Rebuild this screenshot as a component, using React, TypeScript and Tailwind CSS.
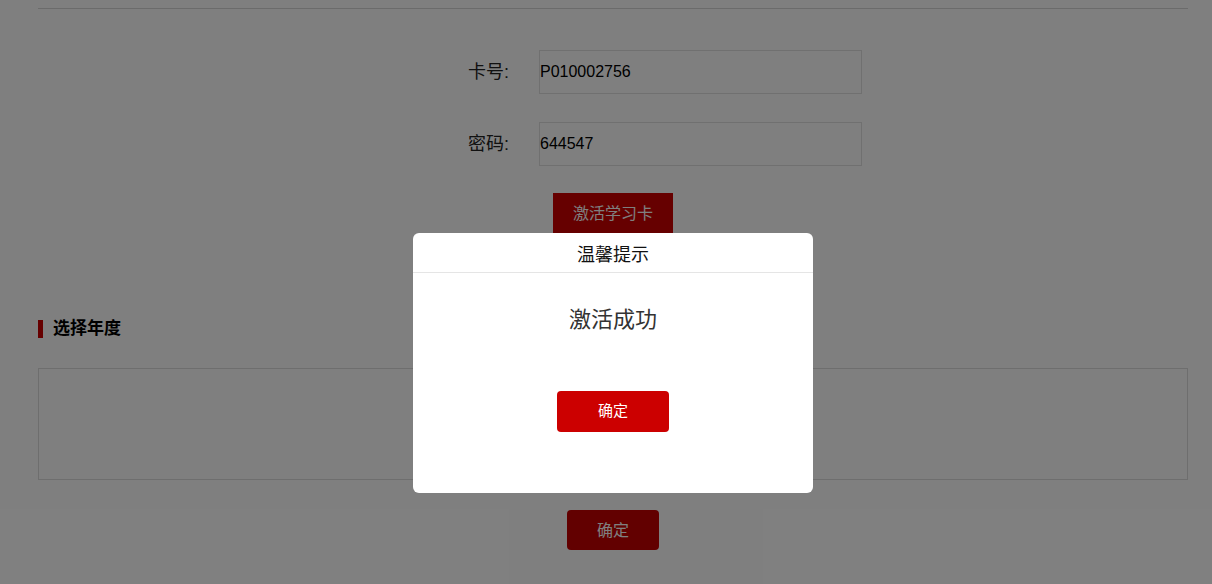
import React from "react";

export default function App() {
  const font = { fontFamily: '"Liberation Sans", "Noto Sans CJK SC", sans-serif' };
  return (
    <div className="relative w-[1212px] h-[584px] overflow-hidden bg-white" style={font}>
      <div className="px-[38px] pt-[8px] w-[1226px]">
        <div className="border-t border-[#d6d6d6]" />
        <div className="flex flex-col gap-[28px] pt-[41px]">
          <div className="flex items-center">
            <div className="w-[501px] pr-[30px] text-right text-[18px] text-[#222]">卡号:</div>
            <div className="w-[323px] h-[44px] border border-[#e0e0e0] flex items-center text-[16px] text-black">P010002756</div>
          </div>
          <div className="flex items-center">
            <div className="w-[501px] pr-[30px] text-right text-[18px] text-[#222]">密码:</div>
            <div className="w-[323px] h-[44px] border border-[#e0e0e0] flex items-center text-[16px] text-black">644547</div>
          </div>
        </div>
        <div className="flex justify-center pt-[27px]">
          <div className="w-[120px] h-[42px] bg-[#cc0000] text-white text-[16px] flex items-center justify-center">激活学习卡</div>
        </div>
        <div className="flex items-center gap-[10px] mt-[82px]">
          <div className="w-[5px] h-[18px] bg-[#cc0000]" />
          <div className="text-[17px] font-bold text-black leading-[24px]">选择年度</div>
        </div>
        <div className="mt-[27px] h-[112px] border border-[#dcdcdc]" />
        <div className="flex justify-center pt-[30px]">
          <div className="w-[92px] h-[40px] pt-[2px] rounded-[4px] bg-[#c40000] text-white text-[16px] flex items-center justify-center">确定</div>
        </div>
      </div>

      <div className="absolute inset-0 bg-black/50" />

      <div className="absolute left-[413px] top-[233px] w-[400px] h-[260px] bg-white rounded-[6px] flex flex-col">
        <div className="h-[40px] pt-[6px] border-b border-[#e5e5e5] flex items-center justify-center text-[18px] text-[#111]">温馨提示</div>
        <div className="flex justify-center pt-[32px] text-[22px] text-[#333] leading-[30px]">激活成功</div>
        <div className="flex justify-center pt-[56px]">
          <div className="w-[112px] h-[41px] rounded-[4px] bg-[#cc0000] text-white text-[15px] flex items-center justify-center">确定</div>
        </div>
      </div>
    </div>
  );
}
